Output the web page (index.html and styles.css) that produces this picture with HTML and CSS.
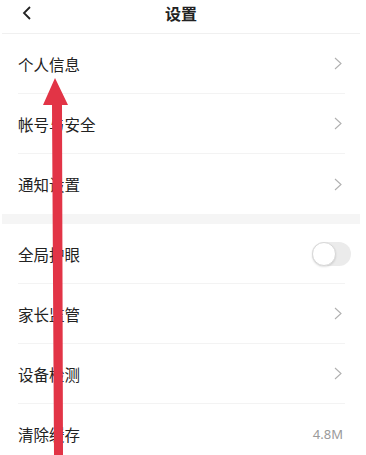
FILE: index.html
```html
<!DOCTYPE html>
<html lang="zh-CN">
<head>
<meta charset="utf-8">
<title>设置</title>
<link rel="stylesheet" href="styles.css">
</head>
<body>
<div class="page">
  <header class="topbar">
    <svg class="back" width="10" height="14" viewBox="0 0 10 14"><path d="M8 1 L2 7 L8 13" fill="none" stroke="#222" stroke-width="1.8"/></svg>
    <h1 class="title">设置</h1>
  </header>
  <ul class="group">
    <li class="row"><span class="label">个人信息</span><svg class="chev" width="8" height="13" viewBox="0 0 8 13"><path d="M1 1 L7 6.5 L1 12" fill="none" stroke="#b0b0b0" stroke-width="1.1"/></svg></li>
    <li class="row"><span class="label">帐号与安全</span><svg class="chev" width="8" height="13" viewBox="0 0 8 13"><path d="M1 1 L7 6.5 L1 12" fill="none" stroke="#b0b0b0" stroke-width="1.1"/></svg></li>
    <li class="row last"><span class="label">通知设置</span><svg class="chev" width="8" height="13" viewBox="0 0 8 13"><path d="M1 1 L7 6.5 L1 12" fill="none" stroke="#b0b0b0" stroke-width="1.1"/></svg></li>
  </ul>
  <div class="gap"></div>
  <ul class="group">
    <li class="row"><span class="label">全局护眼</span><span class="toggle"><span class="knob"></span></span></li>
    <li class="row"><span class="label">家长监管</span><svg class="chev" width="8" height="13" viewBox="0 0 8 13"><path d="M1 1 L7 6.5 L1 12" fill="none" stroke="#b0b0b0" stroke-width="1.1"/></svg></li>
    <li class="row"><span class="label">设备检测</span><svg class="chev" width="8" height="13" viewBox="0 0 8 13"><path d="M1 1 L7 6.5 L1 12" fill="none" stroke="#b0b0b0" stroke-width="1.1"/></svg></li>
    <li class="row last"><span class="label">清除缓存</span><span class="value">4.8M</span></li>
  </ul>
</div>
<svg class="arrow" width="366" height="455" viewBox="0 0 366 455"><polygon points="43,105 55,78 68,105 62,105 63,455 54,455 52,105" fill="#e23446"/></svg>
</body>
</html>
```
FILE: styles.css
```css
html, body {
  margin: 0;
  padding: 0;
  background: #fff;
}
*, *::before, *::after {
  box-sizing: border-box;
}
body {
  width: 366px;
  height: 455px;
  overflow: hidden;
  position: relative;
  font-family: "Noto Sans CJK SC", "Noto Sans", sans-serif;
  color: #222;
}
.page {
  width: 358px;
  margin-left: 2px;
}
.topbar {
  height: 34px;
  border-bottom: 1px solid #f0f0f0;
  display: flex;
  align-items: center;
  justify-content: center;
  position: relative;
}
.back {
  position: absolute;
  left: 20px;
  top: 6px;
}
.title {
  margin: 0;
  font-size: 16px;
  font-weight: 700;
  line-height: 20px;
  margin-top: -8px;
}
.group {
  list-style: none;
  margin: 0;
  padding: 0 0 0 16px;
}
.row {
  height: 60px;
  border-bottom: 1px solid #f3f3f3;
  width: 327px;
  display: flex;
  align-items: center;
  justify-content: space-between;
}
.row.last {
  border-bottom: none;
}
.label {
  font-size: 15.5px;
  line-height: 20px;
}
.chev {
  margin-right: 3px;
}
.value {
  font-size: 13px;
  color: #9a9a9a;
  margin-right: 2px;
  font-family: "Noto Sans", sans-serif;
}
.gap {
  height: 10px;
  background: #f5f5f5;
}
.toggle {
  width: 39px;
  height: 24px;
  border-radius: 12px;
  background: #ebebeb;
  margin-right: -6px;
  position: relative;
}
.knob {
  position: absolute;
  left: 0;
  top: 0;
  width: 24px;
  height: 24px;
  border-radius: 50%;
  background: #fff;
  border: 1px solid #d8d8d8;
  box-shadow: 0 1px 2px rgba(0,0,0,0.12);
}
.arrow {
  position: absolute;
  left: 0;
  top: 0;
}
```
